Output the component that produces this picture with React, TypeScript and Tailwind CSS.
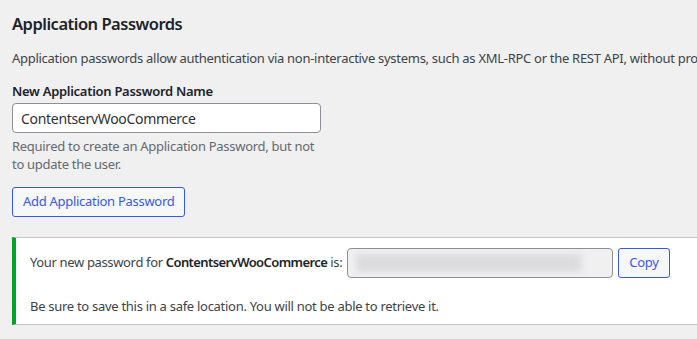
const App = () => {
  return (
    <div
      className="min-h-screen w-full overflow-hidden bg-[#f0f0f1] text-[#3c434a] text-[13px] tracking-[-0.022em]"
      style={{ fontFamily: '"Noto Sans", "Open Sans", sans-serif' }}
    >
      <div className="pl-3 w-[760px]">
        <h2 className="pt-[13px] text-[16.5px] leading-[22px] font-semibold tracking-[-0.03em] text-[#1d2327]">
          Application Passwords
        </h2>
        <p className="mt-[13px] leading-[20px] whitespace-nowrap">
          Application passwords allow authentication via non-interactive systems, such as XML-RPC or the REST API, without providing your actual password.
        </p>

        <div className="mt-[14px]">
          <label className="block font-semibold text-[#1d2327] leading-[18px]">
            New Application Password Name
          </label>
          <input
            className="mt-[3px] block h-[30px] w-[309px] rounded-[4px] border border-[#8c8f94] bg-white px-[8px] text-[14px] text-[#2c3338] tracking-[-0.022em] outline-none"
            style={{ fontFamily: 'inherit' }}
            defaultValue="ContentservWooCommerce"
          />
          <p className="mt-[4px] w-[310px] leading-[18px] text-[#646970]">
            Required to create an Application Password, but not to update the user.
          </p>
        </div>

        <button className="mt-[14px] h-[30px] rounded-[3px] border border-[#3858e9] bg-[#f6f7f7] px-[10px] text-[13px] text-[#3858e9]">
          Add Application Password
        </button>

        <div className="mt-[20px] border border-[#c3c4c7] border-l-4 border-l-[#00a32a] bg-white pl-[14px] pt-[10px] pb-[8px]">
          <div className="flex items-center gap-[5px]">
            <span className="tracking-[-0.027em]">
              Your new password for <strong className="font-semibold tracking-[-0.045em] text-[#1d2327]">ContentservWooCommerce</strong> is:
            </span>
            <div className="relative h-[30px] w-[266px] overflow-hidden rounded-[4px] border border-[#8c8f94] bg-[#f0f0f1]">
              <div className="absolute left-[8px] top-[5px] h-[18px] w-[226px] bg-[#dcdcde] blur-[3px]" />
            </div>
            <button className="h-[30px] rounded-[3px] border border-[#3858e9] bg-[#f6f7f7] px-[10px] text-[13px] text-[#3858e9]">
              Copy
            </button>
          </div>
          <p className="mt-[18px] leading-[20px]">
            Be sure to save this in a safe location. You will not be able to retrieve it.
          </p>
        </div>
      </div>
    </div>
  );
};

export default App;
